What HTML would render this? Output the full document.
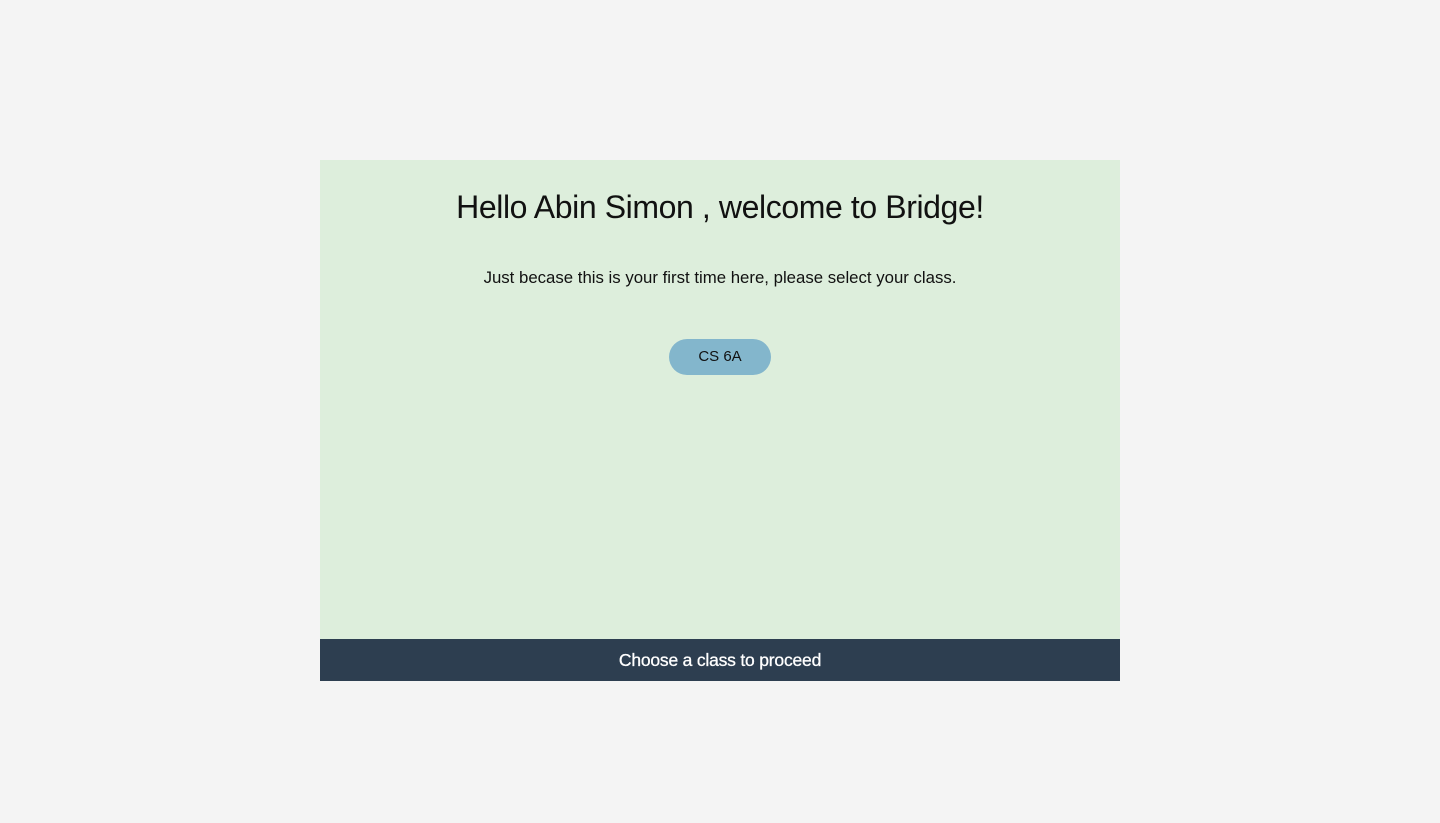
<!DOCTYPE html>
<html><head><meta charset="utf-8"><style>
html,body{margin:0;padding:0;width:1440px;height:823px;background:#f4f4f4;font-family:"Liberation Sans",sans-serif;overflow:hidden}
.card{position:absolute;left:320px;top:160px;width:800px;height:479px;background:#ddeedc;text-align:center}
h1{margin:0;position:absolute;top:187px;left:320px;width:800px;text-align:center;font-weight:normal;font-size:32px;color:#111;letter-spacing:-0.4px;line-height:40px}
.sub{position:absolute;top:267px;left:320px;width:800px;text-align:center;font-size:16.8px;color:#111;line-height:22px}
.btn{position:absolute;left:669px;top:339px;width:102px;height:36px;border-radius:18px;background:#83b6cc;font-size:15px;line-height:36px;text-align:center;color:#111}
.bar{position:absolute;left:320px;top:639px;width:800px;height:42px;background:#2d3e50;color:#fff;font-size:17.5px;line-height:42px;text-align:center;letter-spacing:-0.2px;-webkit-text-stroke:0.3px #fff}
</style></head><body>
<div class="card"></div>
<h1>Hello Abin Simon , welcome to Bridge!</h1>
<div class="sub">Just becase this is your first time here, please select your class.</div>
<div class="btn">CS 6A</div>
<div class="bar">Choose a class to proceed</div>
</body></html>
